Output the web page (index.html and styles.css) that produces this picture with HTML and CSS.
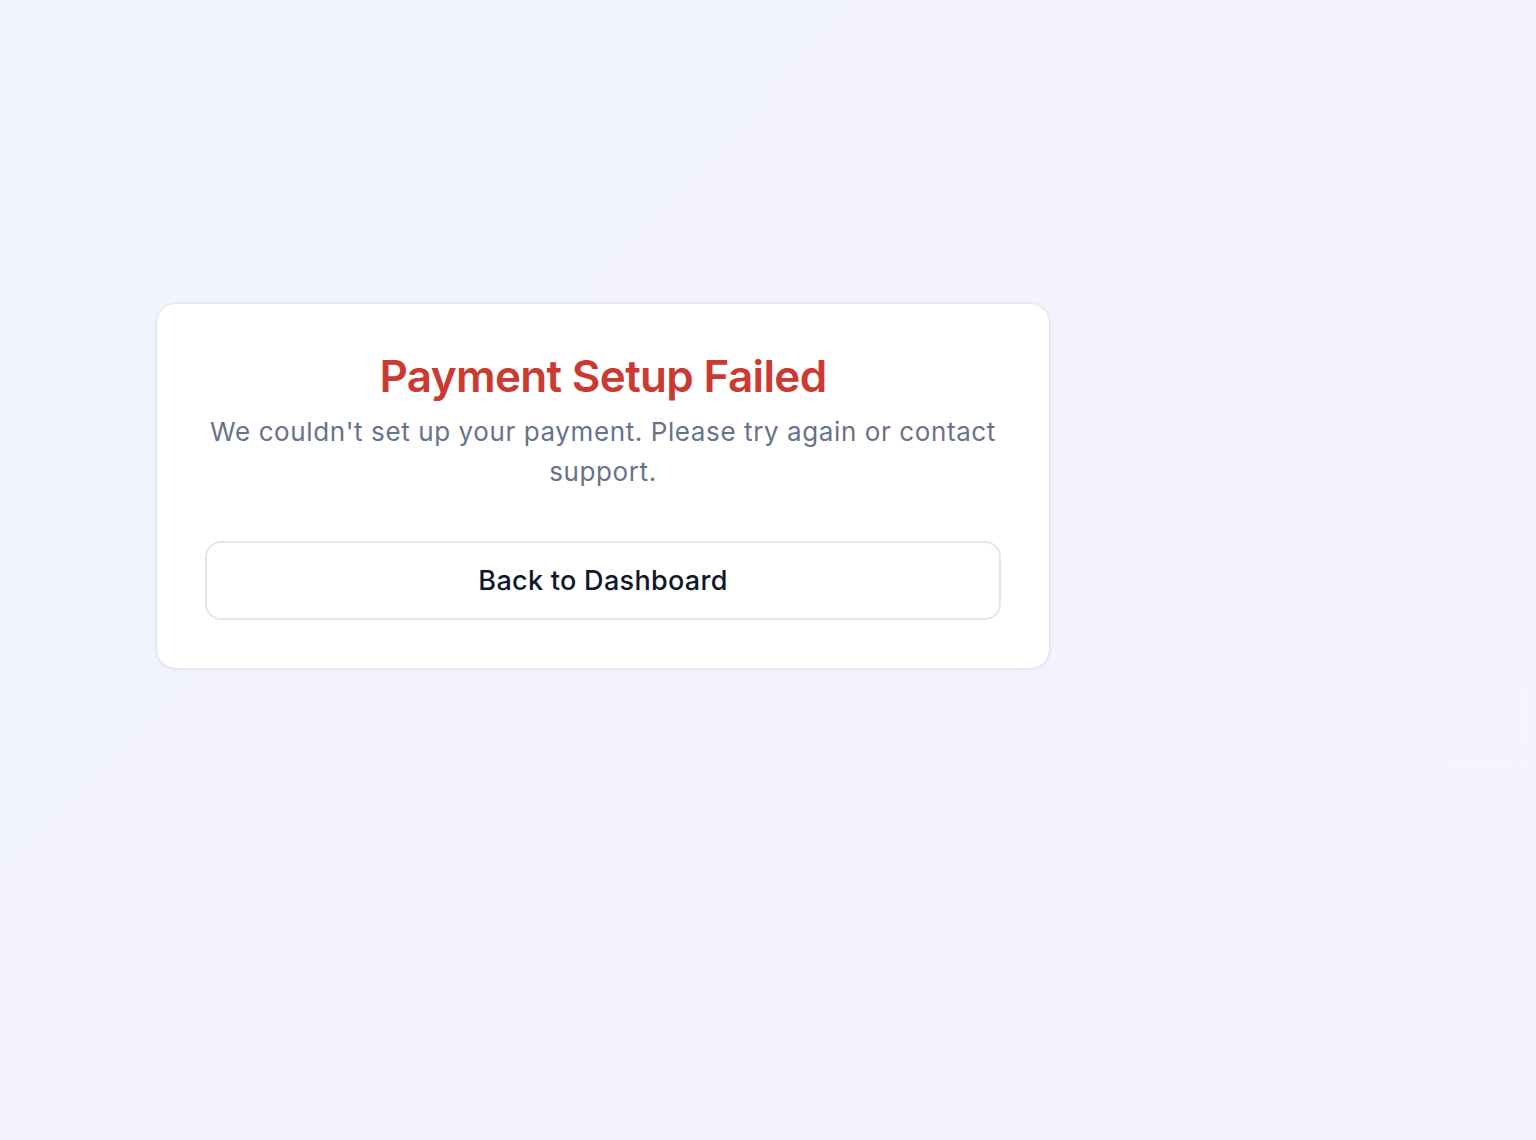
FILE: index.html
```html
<!DOCTYPE html>
<html lang="en">
<head>
<meta charset="utf-8">
<title>Payment Setup Failed</title>
<link rel="stylesheet" href="styles.css">
</head>
<body>
<main class="page">
  <section class="card">
    <h1 class="title">Payment Setup Failed</h1>
    <p class="message">We couldn't set up your payment. Please try again or contact support.</p>
    <button class="btn" type="button">Back to Dashboard</button>
  </section>
</main>
</body>
</html>
```

FILE: styles.css
```css
* { box-sizing: border-box; }
html, body { margin: 0; height: 100%; }
body {
  font-family: Inter, "Noto Sans", "Liberation Sans", sans-serif;
  background: linear-gradient(135deg, #f1f5fe 0%, #f4f4fe 50%, #f6f3fe 100%);
  min-height: 1140px;
}
.page {
  padding: 303px 0 0 156px;
}
.card {
  width: 894px;
  background: #ffffff;
  border: 1.5px solid #e1e5ee;
  border-radius: 20px;
  padding: 48px;
  box-shadow: 0 1px 4px rgba(15, 23, 42, 0.07);
  text-align: center;
}
.title {
  margin: 0;
  font-size: 44px;
  line-height: 48px;
  font-weight: 600;
  letter-spacing: -0.65px;
  color: #cb3a31;
}
.message {
  margin: 12px 0 0;
  font-size: 26px;
  line-height: 40px;
  letter-spacing: 0.6px;
  color: #667389;
}
.btn {
  display: block;
  width: 100%;
  height: 79px;
  margin-top: 49px;
  background: #ffffff;
  border: 2px solid #e2e6ef;
  border-radius: 16px;
  font-family: inherit;
  font-size: 27px;
  font-weight: 500;
  letter-spacing: 0.3px;
  color: #0f172a;
  cursor: pointer;
}
```
